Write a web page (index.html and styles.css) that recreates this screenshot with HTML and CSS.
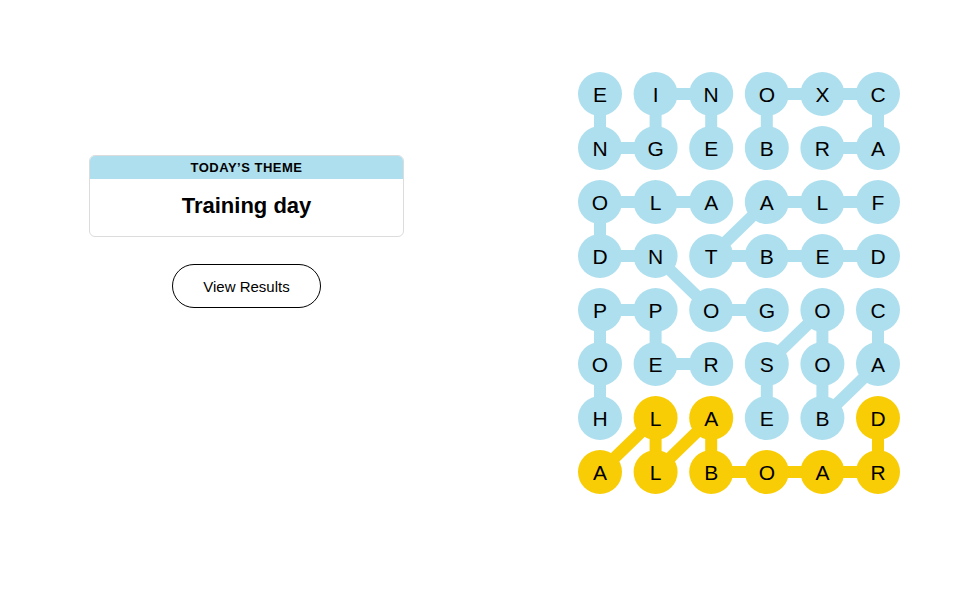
FILE: index.html
```html
<!DOCTYPE html>
<html lang="en">
<head>
  <meta charset="UTF-8" />
  <meta name="viewport" content="width=device-width, initial-scale=1.0" />
  <title>Strands</title>
  <link rel="stylesheet" href="styles.css">
</head>
<body>
  <main class="game">
    <section class="side">
      <div class="theme-card">
        <div class="theme-label">TODAY’S THEME</div>
        <div class="theme-title">Training day</div>
      </div>
      <button class="results-btn" type="button">View Results</button>
    </section>

    <section class="board">
      <svg id="board" width="322" height="422" viewBox="0 0 322 422"></svg>
    </section>
  </main>

  <script>
    // letras do tabuleiro, linha por linha
    const rows = [
      'EINOXC',
      'NGEBRA',
      'OLAALF',
      'DNTBED',
      'PPOGOC',
      'OERSOA',
      'HLAEBD',
      'ALBOAR'
    ];

    // palavras encontradas: [linha, coluna] começando em 1
    const words = [
      { spangram: false, cells: [[1,1],[2,1],[2,2],[1,2],[1,3],[2,3]] },           // ENGINE
      { spangram: false, cells: [[2,4],[1,4],[1,5],[1,6],[2,6],[2,5]] },           // BOXCAR
      { spangram: false, cells: [[5,4],[5,3],[4,2],[4,1],[3,1],[3,2],[3,3]] },     // GONDOLA
      { spangram: false, cells: [[3,6],[3,5],[3,4],[4,3],[4,4],[4,5],[4,6]] },     // FLATBED
      { spangram: false, cells: [[7,1],[6,1],[5,1],[5,2],[6,2],[6,3]] },           // HOPPER
      { spangram: false, cells: [[5,6],[6,6],[7,5],[6,5],[5,5],[6,4],[7,4]] },     // CABOOSE
      { spangram: true,  cells: [[8,1],[7,2],[8,2],[7,3],[8,3],[8,4],[8,5],[8,6],[7,6]] } // ALLABOARD
    ];

    const R = 22;
    const colStep = 55.6;
    const rowStep = 54;
    const svg = document.getElementById('board');
    const NS = 'http://www.w3.org/2000/svg';

    const cx = c => R + (c - 1) * colStep;
    const cy = r => R + (r - 1) * rowStep;

    const owner = {};
    words.forEach(w => w.cells.forEach(([r, c]) => owner[r + '-' + c] = w));

    // linhas ligando as letras
    words.forEach(w => {
      for (let i = 1; i < w.cells.length; i++) {
        const [r1, c1] = w.cells[i - 1];
        const [r2, c2] = w.cells[i];
        const line = document.createElementNS(NS, 'line');
        line.setAttribute('x1', cx(c1));
        line.setAttribute('y1', cy(r1));
        line.setAttribute('x2', cx(c2));
        line.setAttribute('y2', cy(r2));
        line.setAttribute('class', w.spangram ? 'link spangram' : 'link');
        svg.appendChild(line);
      }
    });

    // círculos e letras
    rows.forEach((row, ri) => {
      row.split('').forEach((ch, ci) => {
        const r = ri + 1, c = ci + 1;
        const w = owner[r + '-' + c];
        const circle = document.createElementNS(NS, 'circle');
        circle.setAttribute('cx', cx(c));
        circle.setAttribute('cy', cy(r));
        circle.setAttribute('r', R);
        circle.setAttribute('class', w && w.spangram ? 'dot spangram' : 'dot');
        svg.appendChild(circle);

        const text = document.createElementNS(NS, 'text');
        text.setAttribute('x', cx(c));
        text.setAttribute('y', cy(r) + 7.5);
        text.setAttribute('class', 'letter');
        text.textContent = ch;
        svg.appendChild(text);
      });
    });
  </script>
</body>
</html>
```

FILE: styles.css
```css
* {
  box-sizing: border-box;
  margin: 0;
  padding: 0;
  font-family: 'Liberation Sans', Arial, sans-serif;
}

body {
  background-color: #fff;
  color: #000;
}

.game {
  display: flex;
  align-items: flex-start;
  gap: 174px;
  padding: 72px 0 0 89px;
}

.side {
  width: 315px;
  padding-top: 83px;
  display: flex;
  flex-direction: column;
  align-items: center;
}

.theme-card {
  width: 100%;
  border: 1px solid #dcdcdc;
  border-radius: 6px;
  overflow: hidden;
}

.theme-label {
  background-color: #aedfee;
  height: 23px;
  line-height: 23px;
  text-align: center;
  font-size: 13px;
  font-weight: bold;
  letter-spacing: 0.5px;
}

.theme-title {
  text-align: center;
  font-size: 22px;
  font-weight: bold;
  padding: 14px 0 17px;
  line-height: 26px;
}

.results-btn {
  margin-top: 27px;
  width: 149px;
  height: 44px;
  border: 1px solid #000;
  border-radius: 22px;
  background: #fff;
  font-size: 15px;
  color: #000;
  cursor: pointer;
}

.board svg {
  display: block;
}

.link {
  stroke: #aedfee;
  stroke-width: 12;
}

.link.spangram {
  stroke: #f8cd05;
}

.dot {
  fill: #aedfee;
}

.dot.spangram {
  fill: #f8cd05;
}

.letter {
  font-size: 21px;
  text-anchor: middle;
  fill: #000;
}
```
